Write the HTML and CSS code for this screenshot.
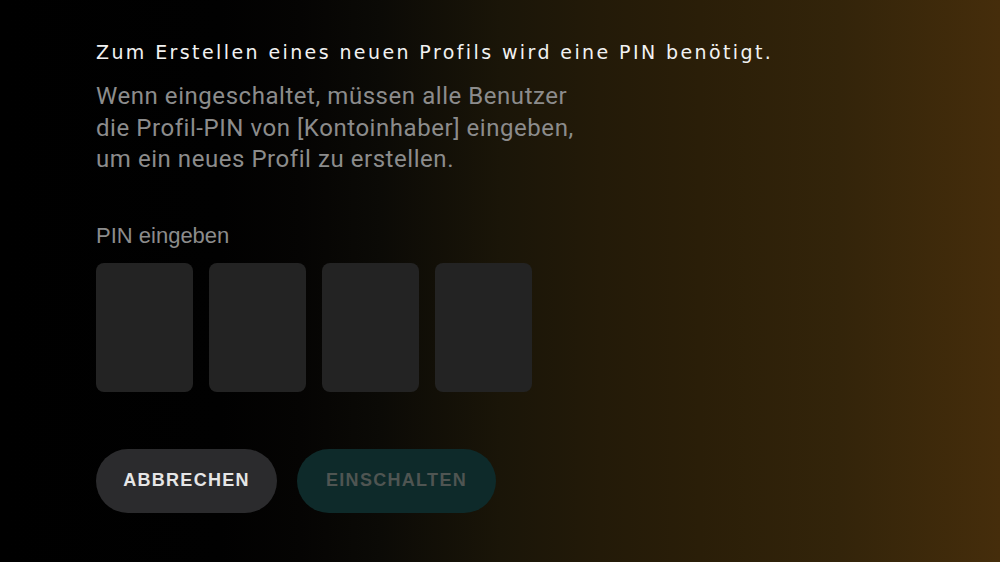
FILE: index.html
```html
<!DOCTYPE html>
<html lang="de">
<head>
<meta charset="utf-8">
<title>PIN</title>
<link rel="stylesheet" href="styles.css">
</head>
<body>
<main class="screen">
  <section class="content">
    <h1 class="title">Zum Erstellen eines neuen Profils wird eine PIN benötigt.</h1>
    <p class="desc">Wenn eingeschaltet, müssen alle Benutzer<br>die Profil-PIN von [Kontoinhaber] eingeben,<br>um ein neues Profil zu erstellen.</p>
    <div class="pin-label">PIN eingeben</div>
    <div class="pins">
      <div class="pin"></div>
      <div class="pin"></div>
      <div class="pin"></div>
      <div class="pin"></div>
    </div>
    <div class="actions">
      <button class="btn btn-cancel">ABBRECHEN</button>
      <button class="btn btn-on">EINSCHALTEN</button>
    </div>
  </section>
</main>
</body>
</html>
```
FILE: styles.css
```css
html, body {
  margin: 0;
  padding: 0;
  width: 1000px;
  height: 562px;
  overflow: hidden;
}
.screen {
  width: 1000px;
  height: 562px;
  background: linear-gradient(90deg, #000 0%, #010101 22%, #050403 30%, #0b0a06 38%, #1a1508 50%, #231a08 60%, #2a1e08 70%, #33240a 84%, #452d0b 100%);
  box-sizing: border-box;
  padding: 40px 0 0 96px;
}
.content {
  display: flex;
  flex-direction: column;
}
.title {
  margin: 0;
  font-family: "DejaVu Sans", Verdana, sans-serif;
  font-weight: 400;
  font-size: 19px;
  line-height: 24px;
  letter-spacing: 2.4px;
  color: #f2f2f2;
  white-space: nowrap;
}
.desc {
  margin: 17px 0 0;
  font-family: Roboto, "Liberation Sans", sans-serif;
  font-size: 24px;
  line-height: 31.5px;
  letter-spacing: 0.55px;
  color: #8c8c8c;
}
.pin-label {
  margin-top: 49px;
  font-family: "Liberation Sans", Arial, sans-serif;
  font-size: 22px;
  line-height: 22px;
  color: #8c8c8c;
}
.pins {
  margin-top: 16px;
  display: flex;
  gap: 16px;
}
.pin {
  width: 97px;
  height: 129px;
  border-radius: 8px;
  background: #232323;
}
.actions {
  margin-top: 57px;
  display: flex;
  gap: 20px;
}
.btn {
  height: 64px;
  border: none;
  border-radius: 32px;
  font-family: "Liberation Sans", Arial, sans-serif;
  font-weight: 700;
  font-size: 18px;
  letter-spacing: 1.3px;
  padding: 0;
}
.btn-cancel {
  width: 181px;
  background: #2b2b2d;
  color: #e6e6e6;
}
.btn-on {
  width: 199px;
  background: #0e2a2a;
  color: #4f5552;
}
```
